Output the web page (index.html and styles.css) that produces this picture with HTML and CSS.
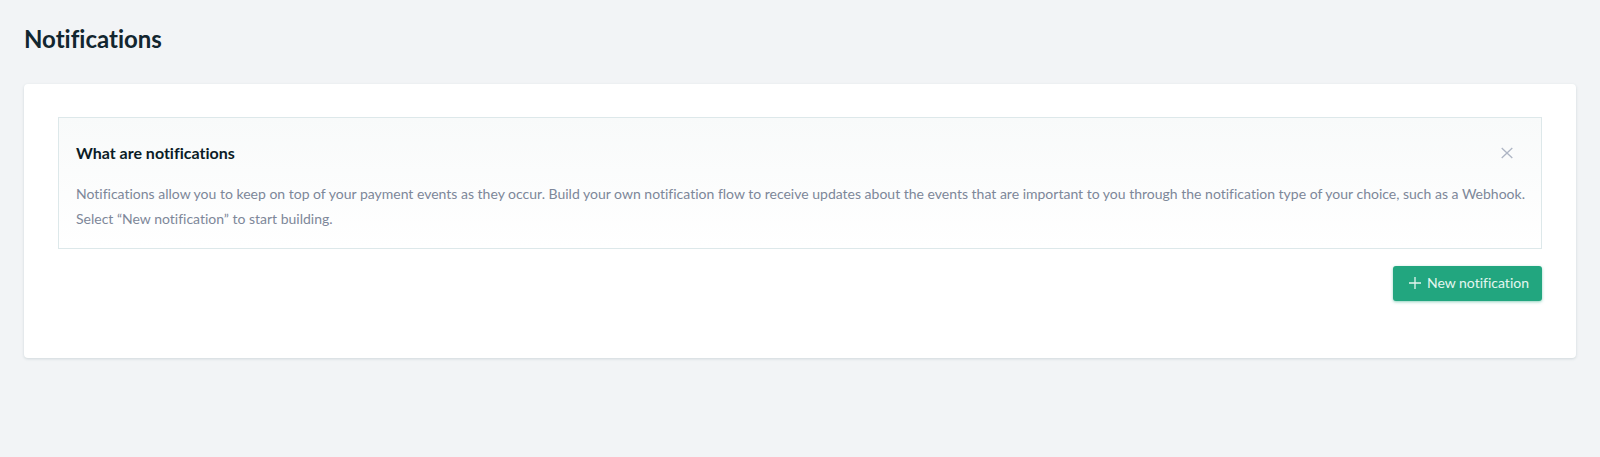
FILE: index.html
```html
<!DOCTYPE html>
<html lang="en">
<head>
<meta charset="utf-8">
<meta name="viewport" content="width=device-width, initial-scale=1">
<title>Notifications</title>
<link rel="stylesheet" href="styles.css">
</head>
<body>
<main class="page">
  <h1 class="page-title">Notifications</h1>
  <section class="card">
    <div class="info">
      <div class="info-header">
        <h2 class="info-title">What are notifications</h2>
        <button class="close" type="button" aria-label="Close">
          <svg width="12" height="12" viewBox="0 0 12 12" fill="none" stroke="currentColor" stroke-width="1.3" aria-hidden="true"><path d="M.7 1l10.6 10M11.3 1L.7 11"/></svg>
        </button>
      </div>
      <p class="info-text">Notifications allow you to keep on top of your payment events as they occur. Build your own notification flow to receive updates about the events that are important to you through the notification type of your choice, such as a Webhook. Select “New notification” to start building.</p>
    </div>
    <div class="actions">
      <button class="primary" type="button">
        <svg width="12" height="12" viewBox="0 0 12 12" fill="none" stroke="currentColor" stroke-width="1.3" aria-hidden="true"><path d="M6 0v12M0 6h12"/></svg>
        <span>New notification</span>
      </button>
    </div>
  </section>
</main>
</body>
</html>
```

FILE: styles.css
```css
* {
  box-sizing: border-box;
}

body {
  margin: 0;
  background: #f2f4f6;
  color: #12262f;
  font-family: Lato, "Open Sans", sans-serif;
  font-size: 14px;
  font-variant-ligatures: none;
}

.page {
  padding: 23px 24px;
}

.page-title {
  margin: 0 0 29px;
  font-size: 24px;
  line-height: 32px;
  font-weight: 700;
}

.card {
  padding: 33px 34px 57px;
  background: #fff;
  border-radius: 4px;
  box-shadow: 0 1px 3px rgba(30, 70, 80, 0.16);
}

.info {
  padding: 22px 12px 17px 17px;
  border: 1px solid #dde8ea;
  background: linear-gradient(#f8fafa, #fff);
}

.info-header {
  display: flex;
  align-items: center;
  justify-content: space-between;
  margin-bottom: 16px;
}

.info-title {
  margin: 0;
  color: #0b1c26;
  font-size: 16px;
  line-height: 25px;
  font-weight: 700;
}

.close {
  display: flex;
  margin-right: 14px;
  padding: 2px;
  border: 0;
  background: none;
  color: #adb5c4;
  cursor: pointer;
}

.info-text {
  margin: 0;
  color: #7d8799;
  line-height: 25px;
}

.actions {
  display: flex;
  justify-content: flex-end;
  margin-top: 17px;
}

.primary {
  display: flex;
  align-items: center;
  gap: 6px;
  padding: 0 13px 1px 16px;
  border: 0;
  border-radius: 3px;
  background: #22a67f;
  color: #e4f6f0;
  box-shadow: 0 1px 3px rgba(34, 166, 127, 0.5);
  font: inherit;
  line-height: 34px;
  cursor: pointer;
}
```
